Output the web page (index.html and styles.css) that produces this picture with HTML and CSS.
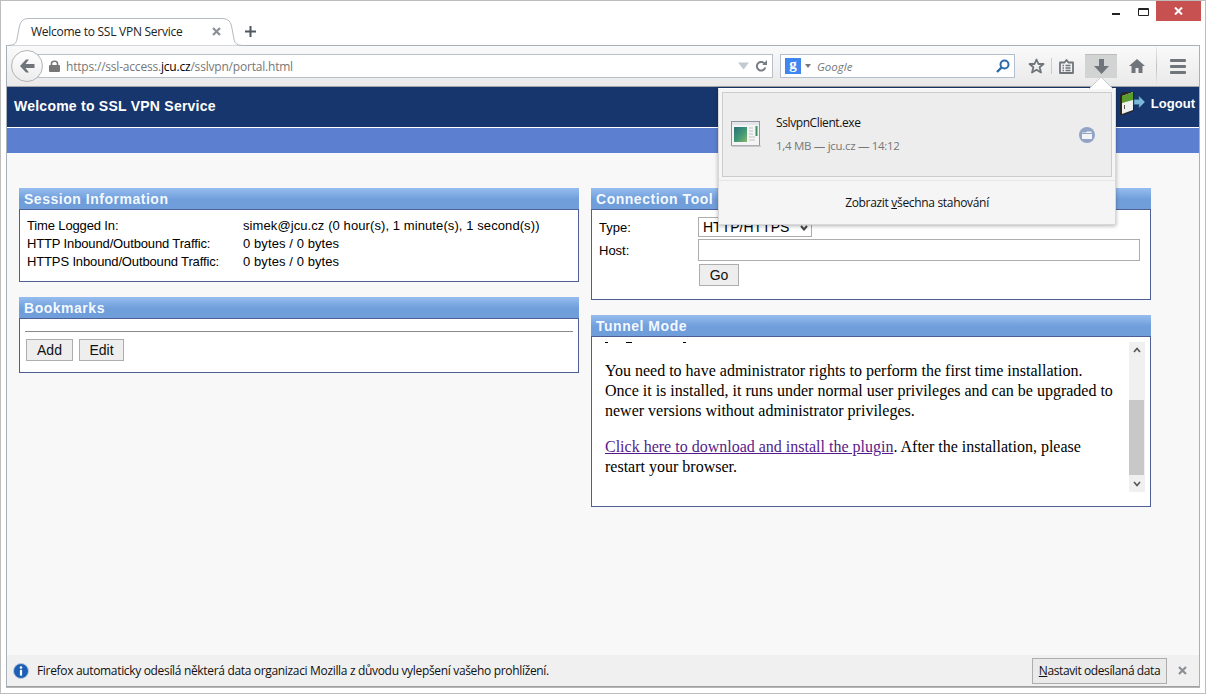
FILE: index.html
```html
<!DOCTYPE html>
<html lang="en">
<head>
<meta charset="utf-8">
<title>Welcome to SSL VPN Service</title>
<link rel="stylesheet" href="styles.css">
</head>
<body>
<div class="window">
  <div class="titlebar">
    <div class="tab">
      <svg class="tab-shape" width="239" height="29" viewBox="0 0 239 29"><path d="M0 28.500C8 28.500 10 27 11 22L13.500 9C15 3 18 1.500 24 1.500H215C221 1.500 224 3 225.500 9L228 22C229 27 231 28.500 239 28.500" fill="#fff" stroke="#b4bac2"/></svg>
      <span class="tab-title">Welcome to SSL VPN Service</span>
      <svg class="tab-close" width="9" height="9" viewBox="0 0 9 9"><path d="M1 1L8 8M8 1L1 8" stroke="#8b9096" stroke-width="2.200"/></svg>
    </div>
    <svg class="new-tab" width="11" height="11" viewBox="0 0 11 11"><path d="M5.500 0V11M0 5.500H11" stroke="#4e5660" stroke-width="2"/></svg>
    <div class="controls">
      <svg class="ctl-min" width="8" height="2"><rect width="8" height="2" fill="#222"/></svg>
      <svg class="ctl-max" width="11" height="8"><path d="M.5 .5H10.500V7.500H.5Z M.5 1.500H10.500" fill="none" stroke="#222"/></svg>
      <div class="ctl-close"><svg width="9" height="8" viewBox="0 0 9 8"><path d="M1 .5L8 7.500M8 .5L1 7.500" stroke="#fff" stroke-width="2"/></svg></div>
    </div>
  </div>
  <div class="browser">
    <div class="nav">
      <div class="back"><svg width="16" height="14" viewBox="0 0 16 14"><path d="M7 .5L1 7L7 13.500H10L6.500 9H15.500V5H6.500L10 .5Z" fill="#70757b"/></svg></div>
      <div class="urlbar">
        <svg class="lock" width="11" height="12" viewBox="0 0 11 12"><path d="M2.500 5V3.500C2.500 .5 8.500 .5 8.500 3.500V5" fill="none" stroke="#777" stroke-width="1.600"/><rect y="5" width="11" height="7" rx="1" fill="#777"/></svg>
        <span class="url">https://ssl-access.<b>jcu.cz</b>/sslvpn/portal.html</span>
        <svg class="url-drop" width="11" height="8" viewBox="0 0 11 8"><path d="M0 .5H11L5.500 7.500Z" fill="#c3c9d0"/></svg>
        <svg class="reload" width="12" height="12" viewBox="0 0 12 12"><path d="M10 4.200A4.300 4.300 0 1 0 10.300 7.500" fill="none" stroke="#777d84" stroke-width="2"/><path d="M7.300 5H12V0Z" fill="#777d84"/></svg>
      </div>
      <div class="searchbar">
        <span class="g-badge">g</span>
        <svg class="g-caret" width="6" height="4"><path d="M0 0H6L3 4Z" fill="#777"/></svg>
        <span class="search-hint">Google</span>
        <svg class="mag" width="14" height="14" viewBox="0 0 14 14"><circle cx="8.500" cy="5.500" r="4" fill="none" stroke="#2b6ca8" stroke-width="2"/><path d="M5.500 8.500L1 13" stroke="#2b6ca8" stroke-width="2.400"/></svg>
      </div>
      <div class="tool tool-star"><svg width="17" height="16" viewBox="0 0 17 16"><path d="M8.500 1.500L10.500 6H15.500L11.600 9.300L13 14.500L8.500 11.700L4 14.500L5.400 9.300L1.500 6H6.500Z" fill="none" stroke="#70757b" stroke-width="1.800" stroke-linejoin="round"/></svg></div>
      <div class="tool-sep"></div>
      <div class="tool tool-list"><svg width="15" height="15" viewBox="0 0 15 15"><path d="M1 3.500H5.500L7.500 1L9.500 3.500H14V14H1Z" fill="none" stroke="#70757b" stroke-width="1.800" stroke-linejoin="round"/><path d="M3.500 6.500H5M6.500 6.500H11.500M3.500 9H5M6.500 9H11.500M3.500 11.500H5M6.500 11.500H11.500" stroke="#70757b" stroke-width="1.300"/></svg></div>
      <div class="tool tool-down"><svg width="15" height="15" viewBox="0 0 15 15"><path d="M5 0H10V7H15L7.500 15L0 7H5Z" fill="#70757b"/></svg></div>
      <div class="tool tool-home"><svg width="16" height="14" viewBox="0 0 16 14"><path d="M8 0L16 7H13.500V14H9.500V9H6.500V14H2.500V7H0Z" fill="#70757b"/></svg></div>
      <div class="tool-sep tall"></div>
      <div class="tool tool-menu"><span></span><span></span><span></span></div>
    </div>
    <div class="page">
      <header class="hero">
        <h1>Welcome to SSL VPN Service</h1>
        <a class="logout" href="#">
          <svg width="26" height="24" viewBox="0 0 26 24"><path d="M1 4L4 1H15V20L4 24H1Z" fill="#262626"/><path d="M3 5L14 1V19L3 23Z" fill="#eef1ee"/><path d="M3 5L14 1V9L3 12Z" fill="#5c9b2e"/><rect x="5" y="14" width="1" height="4" fill="#555"/><path d="M15 8.500H20V5L26 11L20 17V13.500H15Z" fill="#7db8dc" stroke="#2f6888" stroke-width=".7"/></svg>
          <span>Logout</span>
        </a>
      </header>
      <div class="band"></div>
      <main class="content">
        <div class="col">
          <section class="panel">
            <h2>Session Information</h2>
            <div class="panel-body session">
              <span class="key">Time Logged In:</span><span class="val">simek@jcu.cz (0 hour(s), 1 minute(s), 1 second(s))</span>
              <span class="key">HTTP Inbound/Outbound Traffic:</span><span class="val">0 bytes / 0 bytes</span>
              <span class="key">HTTPS Inbound/Outbound Traffic:</span><span class="val">0 bytes / 0 bytes</span>
            </div>
          </section>
          <section class="panel">
            <h2>Bookmarks</h2>
            <div class="panel-body marks">
              <hr class="rule">
              <div class="mark-btns"><button class="btn btn-add">Add</button><button class="btn btn-edit">Edit</button></div>
            </div>
          </section>
        </div>
        <div class="col">
          <section class="panel">
            <h2>Connection Tool</h2>
            <div class="panel-body conn">
              <label>Type:</label>
              <div class="select-wrap">
                <select class="select"><option>HTTP/HTTPS</option></select>
                <svg class="select-arrow" width="8" height="6" viewBox="0 0 8 6"><path d="M1 1L4 4.500L7 1" fill="none" stroke="#444" stroke-width="2"/></svg>
              </div>
              <label>Host:</label>
              <input class="host" type="text">
              <span></span>
              <button class="btn btn-go">Go</button>
            </div>
          </section>
          <section class="panel">
            <h2>Tunnel Mode</h2>
            <div class="panel-body tunnel">
              <div class="tunnel-text">
                <div class="cutline"><i class="c1"></i><i class="c2"></i><i class="c3"></i></div>
                <p>You need to have administrator rights to perform the first time installation. Once it is installed, it runs under normal user privileges and can be upgraded to newer versions without administrator privileges.</p>
                <p><a href="#">Click here to download and install the plugin</a>. After the installation, please restart your browser.</p>
              </div>
              <div class="scroll">
                <svg class="scroll-btn" width="8" height="6" viewBox="0 0 8 6"><path d="M1 5L4 1.500L7 5" fill="none" stroke="#555" stroke-width="1.600"/></svg>
                <div class="thumb"></div>
                <svg class="scroll-btn" width="8" height="6" viewBox="0 0 8 6"><path d="M1 1L4 4.500L7 1" fill="none" stroke="#555" stroke-width="1.600"/></svg>
              </div>
            </div>
          </section>
        </div>
      </main>
    </div>
    <div class="notice">
      <svg class="info" width="16" height="16" viewBox="0 0 16 16"><circle cx="8" cy="8" r="7.500" fill="#1d5fb4" stroke="#b7c6dc"/><circle cx="8" cy="4.500" r="1.300" fill="#fff"/><rect x="6.900" y="6.800" width="2.200" height="5.800" fill="#fff"/></svg>
      <span class="notice-text">Firefox automaticky odesílá některá data organizaci Mozilla z důvodu vylepšení vašeho prohlížení.</span>
      <button class="notice-btn"><u>N</u>astavit odesílaná data</button>
      <svg class="notice-close" width="9" height="9" viewBox="0 0 9 9"><path d="M1 1L8 8M8 1L1 8" stroke="#8b9096" stroke-width="2.200"/></svg>
    </div>
  </div>
  <div class="popup">
    <svg class="popup-arrow" width="24" height="12" viewBox="0 0 24 12"><path d="M0 12L12 0L24 12" fill="#fff" stroke="#ccc"/></svg>
    <div class="dl-item">
      <svg class="dl-file" width="31" height="26" viewBox="0 0 31 26"><rect x="1.500" y=".5" width="28" height="24" fill="#f4f4f4" stroke="#8f959c"/><rect x="2" y="24.500" width="29" height="1.500" fill="#c9c9c9"/><rect x="2" y="1" width="27" height="3" fill="#e3e5e8"/><defs><linearGradient id="fileart" x1="0" y1="0" x2="1" y2="1"><stop offset="0" stop-color="#2e6f78"/><stop offset=".55" stop-color="#3f9a76"/><stop offset="1" stop-color="#8ab36c"/></linearGradient></defs><rect x="4" y="6" width="13" height="15" fill="url(#fileart)"/><path d="M19 7H23M19 10H23M19 13H23M19 16H25M19 19H25" stroke="#bfc3c8"/><rect x="25.500" y="5" width="2" height="10" fill="#3f8f63"/></svg>
      <div class="dl-info">
        <span class="dl-name">SslvpnClient.exe</span>
        <span class="dl-meta">1,4 MB — jcu.cz — 14:12</span>
      </div>
      <svg class="dl-folder" width="16" height="16" viewBox="0 0 16 16"><circle cx="8" cy="8" r="8" fill="#92a4c6"/><path d="M3 5.500H7L8 4.500H12.500V6H3ZM3 7H13V12H3Z" fill="#f3f4f7"/></svg>
    </div>
    <div class="dl-all">Zobrazit <u>v</u>šechna stahování</div>
  </div>
</div>
</body>
</html>
```
FILE: styles.css
```css
* { box-sizing: border-box; }
html, body { margin: 0; height: 100%; overflow: hidden; }
body { font-family: "Liberation Sans", Arial, sans-serif; font-size: 13px; color: #000; }

.window {
  position: relative;
  width: 1206px;
  height: 694px;
  display: flex;
  flex-direction: column;
  padding: 0 5px 5px;
  background: #fff;
  border: 1px solid #bdbdbd;
}

/* title bar and tab */
.titlebar {
  flex: 0 0 45px;
  display: flex;
  align-items: flex-start;
  border-bottom: 1px solid #a9b0ba;
  font-family: "Open Sans", "Noto Sans", sans-serif;
}
.tab {
  position: relative;
  width: 239px;
  height: 29px;
  margin: 16px 0 -1px;
  display: flex;
  align-items: center;
  padding: 0 0 0 25px;
}
.tab-shape { position: absolute; left: 0; top: 0; }
.tab-title { position: relative; font-size: 12px; letter-spacing: -.26px; color: #222; }
.tab-close { position: absolute; left: 206px; top: 10px; }
.new-tab { margin: 25px 0 0 0; }
.controls { margin-left: auto; margin-right: -1px; display: flex; align-items: flex-start; }
.ctl-min { margin: 12px 18px 0 0; }
.ctl-max { margin: 7px 7px 0 0; }
.ctl-close {
  width: 45px;
  height: 20px;
  background: #c75050;
  display: flex;
  align-items: center;
  justify-content: center;
}

/* browser frame */
.browser {
  flex: 1;
  min-height: 0;
  display: flex;
  flex-direction: column;
  border-left: 1px solid #a9b0ba;
  border-right: 1px solid #a9b0ba;
  border-bottom: 1px solid #b5b5b5;
}

/* navigation bar */
.nav {
  flex: 0 0 41px;
  display: flex;
  align-items: center;
  padding: 0 0 0 4px;
  background: linear-gradient(#fafafa, #e9e9e9);
  border-bottom: 1px solid #a5a5a5;
  font-family: "Open Sans", "Noto Sans", sans-serif;
}
.back {
  position: relative;
  z-index: 1;
  width: 32px;
  height: 32px;
  flex: none;
  border-radius: 50%;
  border: 1px solid #b4b4b4;
  background: linear-gradient(#fff, #ececec);
  display: flex;
  align-items: center;
  justify-content: center;
}
.urlbar {
  flex: 1;
  min-width: 0;
  height: 24px;
  margin-left: -5px;
  display: flex;
  align-items: center;
  padding: 0 5px 0 10px;
  background: #fff;
  border: 1px solid #b8c0c9;
}
.url { margin-left: 6px; font-size: 12px; letter-spacing: -.2px; color: #777; }
.url b { font-weight: 400; color: #000; }
.url-drop { margin-left: auto; }
.reload { margin-left: 6px; }
.searchbar {
  flex: 0 0 235px;
  height: 24px;
  margin-left: 7px;
  display: flex;
  align-items: center;
  padding: 0 4px;
  background: #fff;
  border: 1px solid #b4c0d0;
}
.g-badge {
  width: 16px;
  height: 16px;
  background: #3f86f0;
  color: #fff;
  font: 700 15px/13px "Liberation Serif", serif;
  text-align: center;
}
.g-caret { margin-left: 4px; }
.search-hint { margin-left: 6px; font-size: 11.500px; font-style: italic; color: #777; }
.mag { margin-left: auto; }

.tool { display: flex; align-items: center; justify-content: center; flex: none; height: 24px; }
.tool-star { width: 30px; margin-left: 6px; }
.tool-sep { width: 1px; height: 16px; flex: none; background: #c9ccd0; }
.tool-sep.tall { height: 38px; margin-left: 4px; background: linear-gradient(#e8e8e8, #bfc2c6 50%, #e8e8e8); }
.tool-list { width: 28px; }
.tool-down { width: 32px; margin-left: 5px; background: #d2d3d3; border-top: 1px solid #bcbcbc; }
.tool-home { width: 30px; margin-left: 5px; }
.tool-menu { width: 42px; flex-direction: column; gap: 3px; }
.tool-menu span { width: 16px; height: 3px; background: #70757b; border-radius: 1px; }

/* page */
.page { flex: 1; min-height: 0; background: #f8f8f8; }
.hero {
  height: 41px;
  display: flex;
  align-items: center;
  justify-content: space-between;
  padding: 0 4px 0 7px;
  background: #17366d;
  border-bottom: 1px solid #fff;
  color: #fff;
}
.hero h1 { margin: 0 0 2px; font-size: 14px; font-weight: 700; letter-spacing: .24px; }
.logout { display: flex; align-items: center; gap: 6px; margin-bottom: 8px; color: #fff; font-weight: 700; font-size: 13px; letter-spacing: .03px; text-decoration: none; }
.band { height: 25px; background: #5c7fd0; }
.content {
  display: grid;
  grid-template-columns: 560px 560px;
  gap: 12px;
  padding: 35px 0 0 12px;
}
.col { display: flex; flex-direction: column; gap: 15px; }
.panel h2 {
  margin: 0;
  height: 21px;
  padding: 3px 0 0 5px;
  font-size: 14px;
  line-height: 16px;
  font-weight: 700;
  letter-spacing: .52px;
  color: #f4f8ff;
  background: linear-gradient(#96bdef, #6f9edb 55%);
}
.panel-body { background: #fff; border: 1px solid #4f5f95; }

.session {
  height: 73px;
  display: grid;
  grid-template-columns: 216px 1fr;
  grid-auto-rows: 18px;
  align-items: center;
  padding: 6px 0 0 7px;
}
.key { letter-spacing: -.14px; }
.val { letter-spacing: .09px; }
.marks { height: 55px; padding: 12px 5px 0; }
.rule { margin: 0; height: 1px; border: 0; background: #8a8a8a; }
.mark-btns { display: flex; gap: 6px; margin: 7px 0 0 1px; }
.btn {
  height: 22px;
  padding: 0;
  font: 14px "Liberation Sans", Arial, sans-serif;
  color: #111;
  background: #eee;
  border: 1px solid #adadad;
}
.btn-add { width: 47px; }
.btn-edit { width: 45px; }
.btn-go { width: 40px; margin-left: 1px; }

.conn {
  height: 91px;
  display: grid;
  grid-template-columns: 99px 442px;
  grid-template-rows: 20px 22px 22px;
  row-gap: 2px;
  padding: 7px 0 0 7px;
  align-items: center;
}
.conn .btn-go { margin-top: 1px; }
.select-wrap { position: relative; width: 114px; height: 20px; }
.select {
  appearance: none;
  width: 100%;
  height: 100%;
  padding: 0 0 0 4px;
  font: 14px "Liberation Sans", Arial, sans-serif;
  background: #fff;
  border: 1px solid #adadad;
  border-radius: 0;
}
.select-arrow { position: absolute; right: 4px; top: 8px; }
.host { height: 22px; width: 442px; margin: 0; padding: 0; background: #fff; border: 1px solid #adadad; border-radius: 0; }

.tunnel { height: 171px; display: flex; padding: 5px 5px 0 13px; }
.tunnel-text { flex: 1; font: 16px/20px "Liberation Serif", "Times New Roman", serif; }
.tunnel-text p { margin: 0 0 16px; width: 514px; }
.tunnel-text a { color: #551a8b; }
.cutline { display: flex; height: 1px; margin-bottom: 18px; }
.cutline i { display: block; height: 1px; background: #000; }
.cutline .c1 { width: 3px; }
.cutline .c2 { width: 6px; margin-left: 18px; }
.cutline .c3 { width: 3px; margin-left: 51px; }
.scroll {
  flex: 0 0 16px;
  height: 150px;
  display: flex;
  flex-direction: column;
  align-items: center;
  background: #f0f0f0;
}
.scroll-btn { margin: 5px 0; flex: none; }
.thumb { width: 15px; margin: 42px 1px 0 0; height: 75px; background: #c8c8c8; margin-bottom: 1px; }

/* notification */
.notice {
  flex: 0 0 32px;
  display: flex;
  align-items: center;
  padding: 0 12px 0 6px;
  background: #f0f0f0;
  border-bottom: 1px solid #a0a0a0;
  font-family: "Open Sans", "Noto Sans", sans-serif;
}
.notice-text { margin-left: 8px; font-size: 12px; letter-spacing: -.33px; color: #111; }
.notice-btn {
  margin-left: auto;
  width: 135px;
  height: 26px;
  padding: 0;
  font: 12px "Open Sans", "Noto Sans", sans-serif;
  letter-spacing: -.4px;
  color: #111;
  background: #eaeaea;
  border: 1px solid #adadad;
}
.notice-close { margin-left: 11px; }

/* downloads popup */
.popup {
  position: absolute;
  left: 717px;
  top: 87px;
  width: 398px;
  height: 137px;
  padding: 3px;
  background: #f5f5f5;
  border: 1px solid #d8d8d8;
  border-top-color: #fff;
  box-shadow: 0 1px 4px rgba(0, 0, 0, .3);
  font-family: "Open Sans", "Noto Sans", sans-serif;
}
.popup-arrow { position: absolute; left: 370px; top: -12px; }
.dl-item {
  height: 85px;
  display: flex;
  align-items: center;
  padding: 0 16px 0 7px;
  background: #ededed;
  border: 1px solid #ccc;
}
.dl-file { flex: none; margin-bottom: 2px; }
.dl-info { display: flex; flex-direction: column; gap: 7px; margin: -2px 0 0 15px; }
.dl-name { font-size: 12px; letter-spacing: -.4px; color: #111; }
.dl-meta { font-size: 11.500px; letter-spacing: -.3px; color: #777; }
.dl-folder { margin-left: auto; }
.dl-all {
  margin: 3px -3px 0;
  padding-top: 13px;
  border-top: 1px solid #e6e6e6;
  text-align: center;
  font-size: 12px;
  letter-spacing: -.32px;
  color: #111;
}
```
